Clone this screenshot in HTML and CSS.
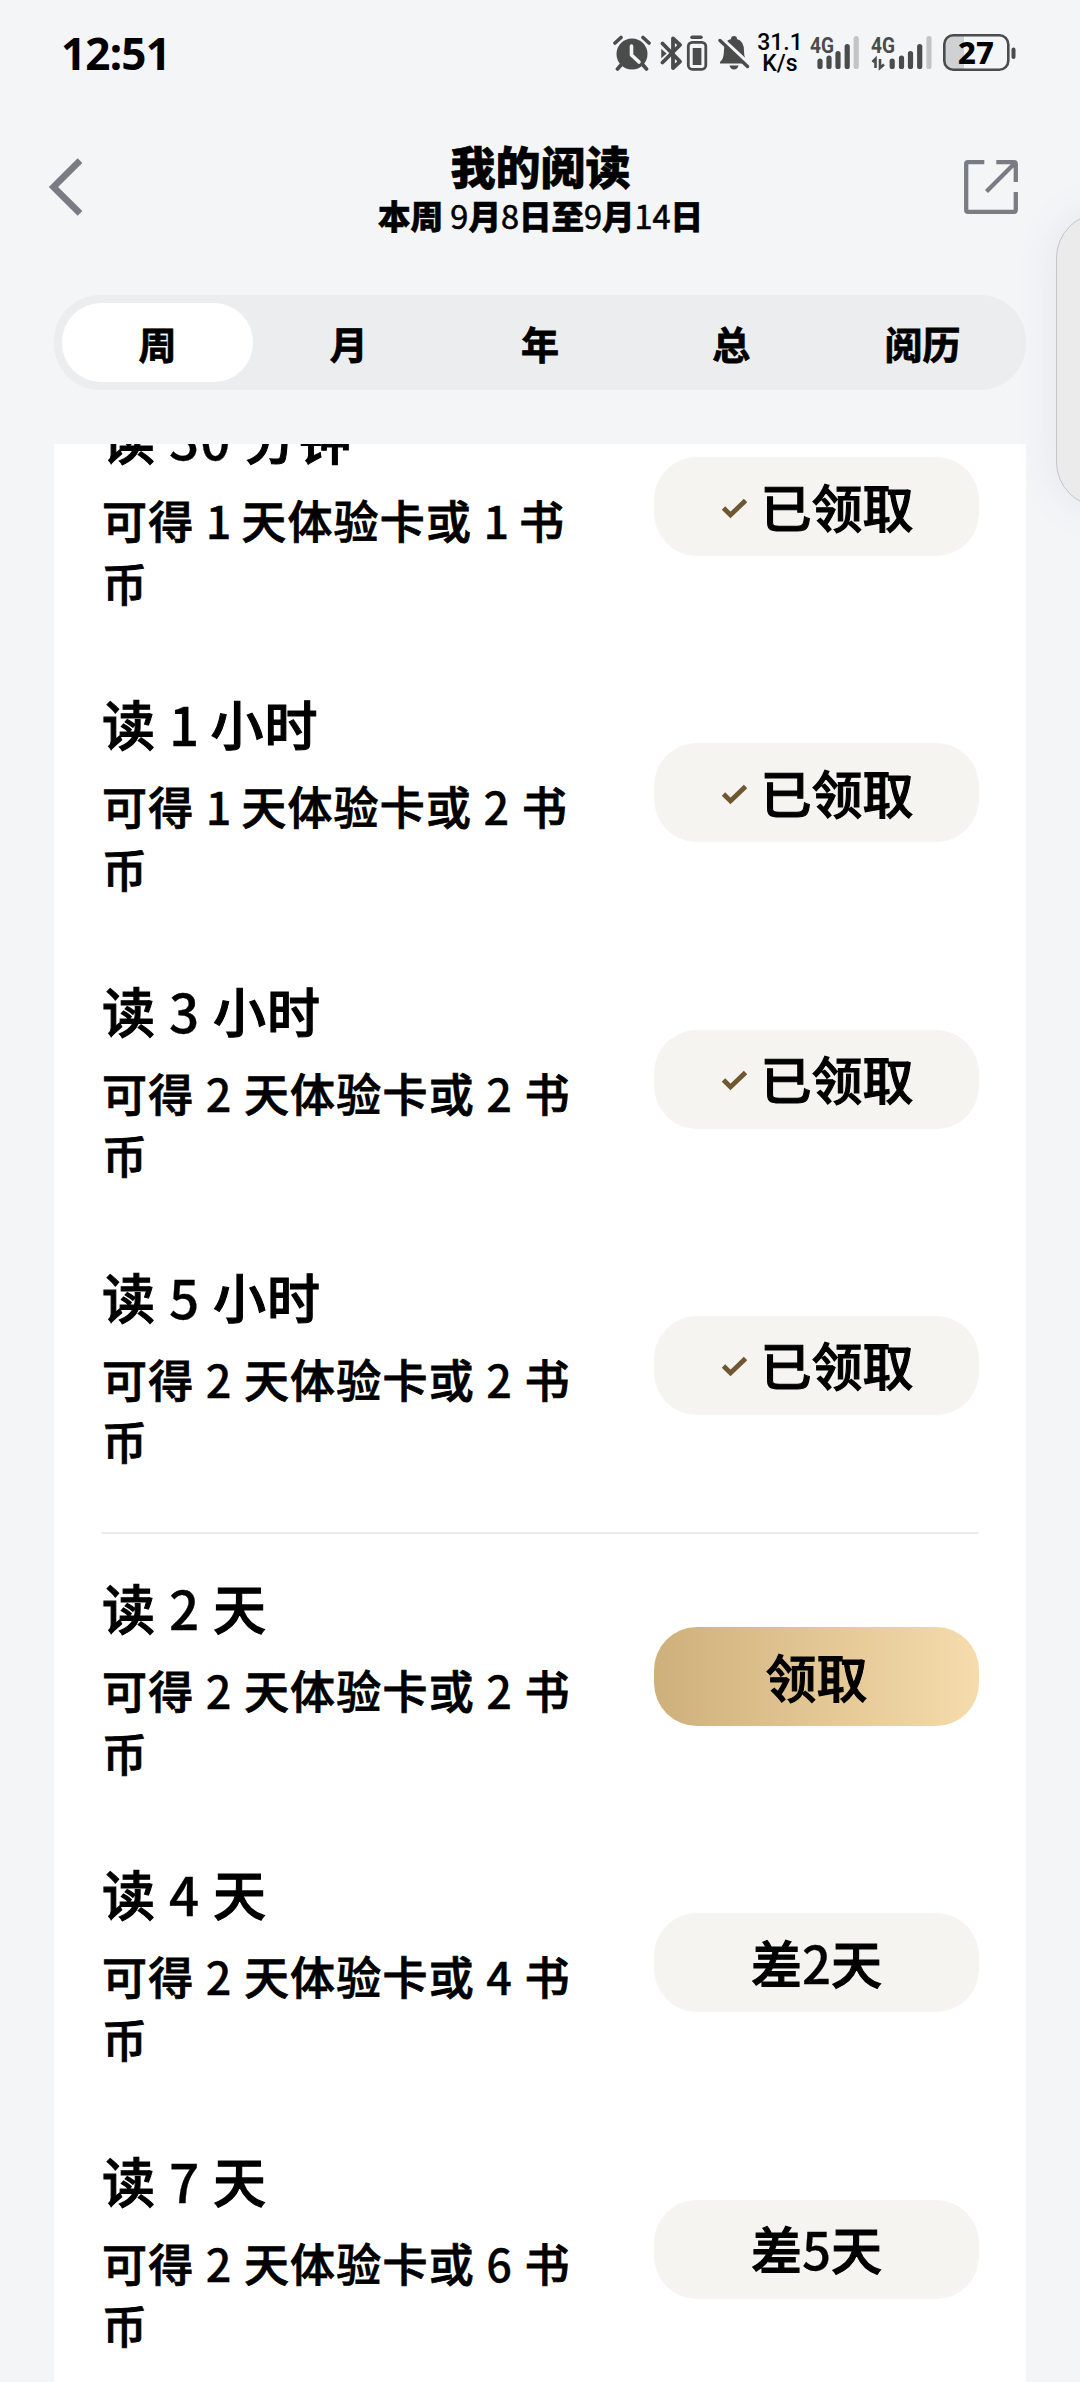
FILE: index.html
```html
<!DOCTYPE html>
<html lang="zh-CN">
<head>
    <meta charset="UTF-8">
    <meta name="viewport" content="width=device-width, initial-scale=1.0">
    <title>我的阅读</title>
    <link rel="stylesheet" href="styles.css">
</head>
<body>
    <!-- Shared check mark for claimed rewards -->
    <svg class="defs" width="0" height="0">
        <symbol id="check" viewBox="0 0 26 22">
            <path d="M2.5 11 L9.5 18 L24.500 3.500" fill="none" stroke="#6f5731" stroke-width="4.8"/>
        </symbol>
    </svg>

    <!-- Status bar -->
    <div class="status-bar">
        <span class="clock">12:51</span>
        <div class="status-icons">
            <svg class="alarm" width="38" height="38" viewBox="0 0 38 38">
                <circle cx="19" cy="20" r="15.5" fill="#4a4b4b"/>
                <path d="M2 9 L8 3.5 M36 9 L30 3.5 M8 31 L4.500 35 M30 31 L33.500 35" stroke="#4a4b4b" stroke-width="3.6" stroke-linecap="round"/>
                <path d="M18.500 12 V21 L26 28" fill="none" stroke="#f3f5f7" stroke-width="3.6" stroke-linecap="round" stroke-linejoin="round"/>
            </svg>
            <svg class="bluetooth" width="48" height="38" viewBox="0 0 48 38">
                <path d="M2.500 9.500 L20 27.500 L13 34 V4.500 L20 11 L2.500 28.500" fill="none" stroke="#4a4b4b" stroke-width="3.8" stroke-linejoin="round" stroke-linecap="round"/>
                <path d="M2 16.500 L5.500 19.500 L2 22.500 Z" fill="#4a4b4b" stroke="#4a4b4b" stroke-width="1.500"/>
                <path d="M32 3.300 H41" stroke="#4a4b4b" stroke-width="3.400" stroke-linecap="round"/>
                <rect x="28.300" y="8.300" width="17.500" height="27" rx="4" fill="none" stroke="#4a4b4b" stroke-width="2.800"/>
                <rect x="32.700" y="14" width="8.700" height="17" fill="#4a4b4b"/>
            </svg>
            <svg class="muted" width="32" height="38" viewBox="0 0 32 38">
                <path d="M2 29.500 V28 Q6 25 6 16 Q6 6.500 13 5 Q13 2 16 2 Q19 2 19 5 Q26 7 26 17 Q26 25 30 28 V29.500 Z" fill="#4a4b4b"/>
                <path d="M11.500 31.500 H20.500 Q19.500 35.500 16 35.500 Q12.500 35.500 11.500 31.500 Z" fill="#4a4b4b"/>
                <path d="M3 4 L31 30" stroke="#f3f5f7" stroke-width="4"/>
                <path d="M2 6.500 L29.500 32.500" stroke="#4a4b4b" stroke-width="3.400" stroke-linecap="round"/>
            </svg>
            <div class="speed">
                <span>31.1</span>
                <span>K/s</span>
            </div>
            <svg class="signal" width="50" height="38" viewBox="0 0 50 38">
                <text x="0" y="19" class="net" textLength="24" lengthAdjust="spacingAndGlyphs">4G</text>
                <path d="M10 27 V32.500 M19 24 V32.500 M28 19.500 V32.500 M37.200 12.500 V32.500" stroke="#4a4b4b" stroke-width="5.200" stroke-linecap="round"/>
                <path d="M46.200 4.500 V32.500" stroke="#c3c4c6" stroke-width="5.200" stroke-linecap="round"/>
            </svg>
            <svg class="signal-2" width="62" height="38" viewBox="0 0 62 38">
                <text x="0" y="19" class="net" textLength="24" lengthAdjust="spacingAndGlyphs">4G</text>
                <path d="M1.500 28 L4.500 25 V34 M9 25 V34 L13 30.500" fill="none" stroke="#4a4b4b" stroke-width="2.600"/>
                <path d="M21.200 27 V32.500 M30.500 24 V32.500 M39.500 19.500 V32.500 M48.700 12.500 V32.500" stroke="#4a4b4b" stroke-width="5.200" stroke-linecap="round"/>
                <path d="M58 4.500 V32.500" stroke="#c3c4c6" stroke-width="5.200" stroke-linecap="round"/>
            </svg>
            <svg class="battery" width="74" height="38" viewBox="0 0 74 38">
                <path d="M11 2 H21 V35 H11 Q2 35 2 26 V11 Q2 2 11 2 Z" fill="#d0d1d3"/>
                <rect x="1.300" y="1.300" width="64" height="34.500" rx="9" fill="none" stroke="#4a4b4b" stroke-width="2.600"/>
                <path d="M70.500 15.500 V23" stroke="#4a4b4b" stroke-width="4" stroke-linecap="round"/>
                <text x="33" y="29.500" class="level" text-anchor="middle">27</text>
            </svg>
        </div>
    </div>

    <!-- Page header -->
    <header class="header">
        <svg class="back" width="36" height="60" viewBox="0 0 36 60">
            <path d="M33 3.700 L6.500 30 L33 56.300" fill="none" stroke="#797c83" stroke-width="6.600"/>
        </svg>
        <div class="titles">
            <h1>我的阅读</h1>
            <p>本周 <i>9</i>月<i>8</i>日至<i>9</i>月<i>14</i>日</p>
        </div>
        <svg class="share" width="54" height="54" viewBox="0 0 54 54">
            <path d="M20.300 2.200 H4 Q2.200 2.200 2.200 4 V50 Q2.200 51.800 4 51.800 H50 Q51.800 51.800 51.800 50 V32 M32.300 2.200 H50 Q51.800 2.200 51.800 4 V22 M51 3 L22.500 31.500" fill="none" stroke="#797c83" stroke-width="4.300"/>
        </svg>
    </header>

    <nav class="tabs">
        <span class="tab active">周</span>
        <span class="tab">月</span>
        <span class="tab">年</span>
        <span class="tab">总</span>
        <span class="tab">阅历</span>
    </nav>

    <!-- Reward list, scrolled a little so the first title is cut off -->
    <main class="card">
        <ul class="rewards">
            <li class="reward">
                <div class="info">
                    <h2>读 <i>30</i> 分钟</h2>
                    <p>可得 <i class="one">1</i> 天体验卡或 <i class="one">1</i> 书币</p>
                </div>
                <button class="btn"><svg class="check" width="26" height="22"><use href="#check"/></svg>已领取</button>
            </li>
            <li class="reward">
                <div class="info">
                    <h2>读 <i class="one">1</i> 小时</h2>
                    <p>可得 <i class="one">1</i> 天体验卡或 <i>2</i> 书币</p>
                </div>
                <button class="btn"><svg class="check" width="26" height="22"><use href="#check"/></svg>已领取</button>
            </li>
            <li class="reward">
                <div class="info">
                    <h2>读 <i>3</i> 小时</h2>
                    <p>可得 <i>2</i> 天体验卡或 <i>2</i> 书币</p>
                </div>
                <button class="btn"><svg class="check" width="26" height="22"><use href="#check"/></svg>已领取</button>
            </li>
            <li class="reward">
                <div class="info">
                    <h2>读 <i>5</i> 小时</h2>
                    <p>可得 <i>2</i> 天体验卡或 <i>2</i> 书币</p>
                </div>
                <button class="btn"><svg class="check" width="26" height="22"><use href="#check"/></svg>已领取</button>
            </li>
        </ul>
        <ul class="rewards days">
            <li class="reward">
                <div class="info">
                    <h2>读 <i>2</i> 天</h2>
                    <p>可得 <i>2</i> 天体验卡或 <i>2</i> 书币</p>
                </div>
                <button class="btn gold">领取</button>
            </li>
            <li class="reward">
                <div class="info">
                    <h2>读 <i>4</i> 天</h2>
                    <p>可得 <i>2</i> 天体验卡或 <i>4</i> 书币</p>
                </div>
                <button class="btn">差<i>2</i>天</button>
            </li>
            <li class="reward">
                <div class="info">
                    <h2>读 <i>7</i> 天</h2>
                    <p>可得 <i>2</i> 天体验卡或 <i>6</i> 书币</p>
                </div>
                <button class="btn">差<i>5</i>天</button>
            </li>
        </ul>
    </main>

    <!-- Floating side panel handle, clipped by the screen edge -->
    <div class="side-clip">
        <div class="side-panel"></div>
    </div>
</body>
</html>
```

FILE: styles.css
```css
* {
    box-sizing: border-box;
    margin: 0;
    padding: 0;
}

body {
    position: relative;
    display: flex;
    flex-direction: column;
    width: 1080px;
    height: 2382px;
    overflow: hidden;
    background-color: #f3f5f7;
    color: #000;
    font-family: "Noto Sans CJK SC", sans-serif;
}

i {
    font-style: normal;
}

.defs {
    position: absolute;
}

/* Status bar */
.status-bar {
    display: flex;
    justify-content: space-between;
    align-items: center;
    height: 106px;
    padding: 0 63px 0 61px;
}

.clock {
    font-family: "Noto Sans", sans-serif;
    font-weight: 700;
    font-size: 44px;
    letter-spacing: -0.800px;
}

.status-icons {
    display: flex;
    align-items: center;
}

.bluetooth {
    margin-left: 9px;
}

.muted {
    margin-left: 10px;
}

.speed {
    display: flex;
    flex-direction: column;
    align-items: center;
    width: 42px;
    margin-left: 9px;
    font-family: Roboto, sans-serif;
    font-size: 23px;
    font-weight: 500;
    line-height: 21px;
}

.signal {
    margin-left: 9px;
}

.signal-2 {
    margin-left: 11px;
}

.battery {
    margin-left: 10px;
}

.net {
    font-family: Roboto, sans-serif;
    font-size: 22px;
    font-weight: 700;
    fill: #4a4b4b;
}

.level {
    font-family: "Noto Sans", sans-serif;
    font-size: 31px;
    font-weight: 800;
}

/* Header */
.header {
    display: flex;
    justify-content: space-between;
    align-items: center;
    height: 162px;
    padding: 0 62px 0 47px;
}

.titles {
    text-align: center;
    padding-top: 5px;
    padding-left: 34px;
}

.titles h1 {
    font-size: 45px;
    font-weight: 900;
    line-height: 50px;
    -webkit-text-stroke: 0.600px #000;
}

.titles p {
    font-size: 32.500px;
    font-weight: 900;
    line-height: 48px;
    -webkit-text-stroke: 0.600px #000;
}

.titles i {
    font-weight: 400;
    -webkit-text-stroke: 0.600px #000;
}

/* Tabs */
.tabs {
    display: flex;
    height: 95px;
    margin: 27px 54px 0;
    padding: 8px;
    border-radius: 46px;
    background-color: #ebedee;
}

.tab {
    display: flex;
    flex: 1;
    justify-content: center;
    align-items: center;
    border-radius: 39px;
    font-size: 38px;
    font-weight: 700;
    -webkit-text-stroke: 0.800px #000;
}

.tab.active {
    background-color: #fff;
}

/* Rewards */
.card {
    flex: 1;
    margin: 54px 54px 0;
    padding: 0 47px;
    overflow: hidden;
    background-color: #fff;
}

.rewards {
    height: 1130px;
    margin-top: -42px;
    list-style: none;
}

.rewards.days {
    height: auto;
    margin-top: 0;
    padding-top: 38px;
    border-top: 2px solid #ececec;
}

.reward {
    display: flex;
    justify-content: space-between;
    align-items: flex-start;
    height: 286.300px;
}

.info {
    width: 480px;
    padding-left: 1px;
}

.info h2 {
    height: 74px;
    margin-bottom: 13px;
    font-size: 53px;
    font-weight: 500;
    line-height: 70px;
    letter-spacing: 1px;
    -webkit-text-stroke: 1.100px #000;
}

.info p {
    font-size: 45px;
    font-weight: 500;
    line-height: 62.500px;
    letter-spacing: 1.200px;
    -webkit-text-stroke: 0.800px #000;
}

/* Digits are a touch lighter than the characters around them */
.info i,
.btn i {
    -webkit-text-stroke: 0.300px #000;
}

/* The digit 1 is set a little tighter than the others */
.info .one {
    letter-spacing: -1.500px;
}

.btn {
    display: flex;
    justify-content: center;
    align-items: center;
    width: 325px;
    height: 99px;
    margin-top: 55px;
    padding-bottom: 2px;
    border: none;
    border-radius: 43px;
    background-color: #f5f4f0;
    color: #000;
    font-family: inherit;
    font-size: 51px;
    font-weight: 500;
    -webkit-text-stroke: 1.100px #000;
}

.btn.gold {
    background: linear-gradient(90deg, #ceb07b, #f6dcac);
}

.check {
    margin-top: 4px;
    margin-right: 13px;
    margin-left: 2px;
}

/* Side panel */
.side-clip {
    position: absolute;
    top: 150px;
    right: 0;
    width: 80px;
    height: 420px;
    overflow: hidden;
}

.side-panel {
    width: 120px;
    height: 294px;
    margin: 63px 0 0 56px;
    border: 1px solid #c4c5c8;
    border-radius: 45px;
    background-color: #ebebeb;
    box-shadow: 0 0 40px rgba(90, 110, 150, 0.1);
}
```
